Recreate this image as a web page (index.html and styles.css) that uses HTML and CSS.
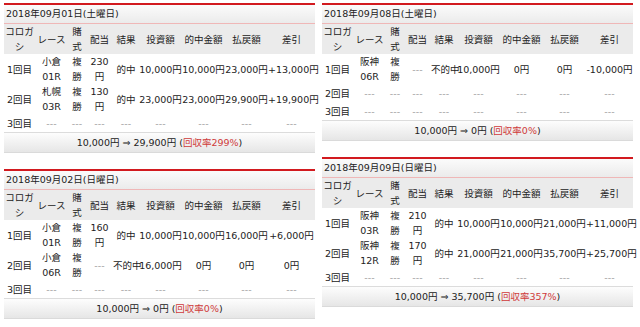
FILE: index.html
```html
<!DOCTYPE html>
<html lang="ja">
<head>
<meta charset="utf-8">
<title>収支</title>
<link rel="stylesheet" href="styles.css">
</head>
<body>
<div class="page">
  <div class="col">
    <section class="card">
      <h2 class="card-title">2018年09月01日(土曜日)</h2>
      <table class="result">
        <colgroup><col class="w1"><col class="w2"><col class="w3"><col class="w4"><col class="w5"><col class="w6"><col class="w6"><col class="w6"><col class="w9"></colgroup>
        <thead><tr><th>コロガ<br>シ</th><th>レース</th><th>賭<br>式</th><th>配当</th><th>結果</th><th>投資額</th><th>的中金額</th><th>払戻額</th><th>差引</th></tr></thead>
        <tbody>
          <tr><td>1回目</td><td>小倉<br>01R</td><td>複<br>勝</td><td>230<br>円</td><td>的中</td><td>10,000円</td><td>10,000円</td><td>23,000円</td><td>+13,000円</td></tr>
          <tr><td>2回目</td><td>札幌<br>03R</td><td>複<br>勝</td><td>130<br>円</td><td>的中</td><td>23,000円</td><td>23,000円</td><td>29,900円</td><td>+19,900円</td></tr>
          <tr class="single"><td>3回目</td><td class="dash">---</td><td class="dash">---</td><td class="dash">---</td><td class="dash">---</td><td class="dash">---</td><td class="dash">---</td><td class="dash">---</td><td class="dash">---</td></tr>
        </tbody>
      </table>
      <div class="card-foot">10,000円 ⇒ 29,900円 (<span class="rate">回収率299%</span>)</div>
    </section>
    <section class="card">
      <h2 class="card-title">2018年09月02日(日曜日)</h2>
      <table class="result">
        <colgroup><col class="w1"><col class="w2"><col class="w3"><col class="w4"><col class="w5"><col class="w6"><col class="w6"><col class="w6"><col class="w9"></colgroup>
        <thead><tr><th>コロガ<br>シ</th><th>レース</th><th>賭<br>式</th><th>配当</th><th>結果</th><th>投資額</th><th>的中金額</th><th>払戻額</th><th>差引</th></tr></thead>
        <tbody>
          <tr><td>1回目</td><td>小倉<br>01R</td><td>複<br>勝</td><td>160<br>円</td><td>的中</td><td>10,000円</td><td>10,000円</td><td>16,000円</td><td>+6,000円</td></tr>
          <tr><td>2回目</td><td>小倉<br>06R</td><td>複<br>勝</td><td class="dash">---</td><td>不的中</td><td>16,000円</td><td>0円</td><td>0円</td><td>0円</td></tr>
          <tr class="single"><td>3回目</td><td class="dash">---</td><td class="dash">---</td><td class="dash">---</td><td class="dash">---</td><td class="dash">---</td><td class="dash">---</td><td class="dash">---</td><td class="dash">---</td></tr>
        </tbody>
      </table>
      <div class="card-foot">10,000円 ⇒ 0円 (<span class="rate">回収率0%</span>)</div>
    </section>
  </div>
  <div class="col">
    <section class="card">
      <h2 class="card-title">2018年09月08日(土曜日)</h2>
      <table class="result">
        <colgroup><col class="w1"><col class="w2"><col class="w3"><col class="w4"><col class="w5"><col class="w6"><col class="w6"><col class="w6"><col class="w9"></colgroup>
        <thead><tr><th>コロガ<br>シ</th><th>レース</th><th>賭<br>式</th><th>配当</th><th>結果</th><th>投資額</th><th>的中金額</th><th>払戻額</th><th>差引</th></tr></thead>
        <tbody>
          <tr><td>1回目</td><td>阪神<br>06R</td><td>複<br>勝</td><td class="dash">---</td><td>不的中</td><td>10,000円</td><td>0円</td><td>0円</td><td>-10,000円</td></tr>
          <tr class="single"><td>2回目</td><td class="dash">---</td><td class="dash">---</td><td class="dash">---</td><td class="dash">---</td><td class="dash">---</td><td class="dash">---</td><td class="dash">---</td><td class="dash">---</td></tr>
          <tr class="single"><td>3回目</td><td class="dash">---</td><td class="dash">---</td><td class="dash">---</td><td class="dash">---</td><td class="dash">---</td><td class="dash">---</td><td class="dash">---</td><td class="dash">---</td></tr>
        </tbody>
      </table>
      <div class="card-foot">10,000円 ⇒ 0円 (<span class="rate">回収率0%</span>)</div>
    </section>
    <section class="card">
      <h2 class="card-title">2018年09月09日(日曜日)</h2>
      <table class="result">
        <colgroup><col class="w1"><col class="w2"><col class="w3"><col class="w4"><col class="w5"><col class="w6"><col class="w6"><col class="w6"><col class="w9"></colgroup>
        <thead><tr><th>コロガ<br>シ</th><th>レース</th><th>賭<br>式</th><th>配当</th><th>結果</th><th>投資額</th><th>的中金額</th><th>払戻額</th><th>差引</th></tr></thead>
        <tbody>
          <tr><td>1回目</td><td>阪神<br>03R</td><td>複<br>勝</td><td>210<br>円</td><td>的中</td><td>10,000円</td><td>10,000円</td><td>21,000円</td><td>+11,000円</td></tr>
          <tr><td>2回目</td><td>阪神<br>12R</td><td>複<br>勝</td><td>170<br>円</td><td>的中</td><td>21,000円</td><td>21,000円</td><td>35,700円</td><td>+25,700円</td></tr>
          <tr class="single"><td>3回目</td><td class="dash">---</td><td class="dash">---</td><td class="dash">---</td><td class="dash">---</td><td class="dash">---</td><td class="dash">---</td><td class="dash">---</td><td class="dash">---</td></tr>
        </tbody>
      </table>
      <div class="card-foot">10,000円 ⇒ 35,700円 (<span class="rate">回収率357%</span>)</div>
    </section>
  </div>
</div>
</body>
</html>
```
FILE: styles.css
```css
* { box-sizing: border-box; }
html, body { margin: 0; padding: 0; background: #fff; }
body {
  font-family: "DejaVu Sans", "Noto Sans CJK JP", sans-serif;
  font-size: 9.5px;
  color: #222;
}
.page {
  display: flex;
  gap: 7px;
  padding: 3px 0 0 4px;
}
.col {
  width: 311px;
  display: flex;
  flex-direction: column;
  gap: 16px;
}
.card {
  border-top: 2px solid #d21a1f;
}
.card-title {
  margin: 0;
  height: 19px;
  line-height: 18px;
  padding: 0 0 0 2px;
  font-size: 9.5px;
  font-weight: normal;
  background: linear-gradient(#fbfbfb, #ebebeb);
  border-bottom: 1px solid #efb7b7;
}
.result {
  width: 100%;
  border-collapse: collapse;
  table-layout: fixed;
}
.w1 { width: 31px; }
.w2 { width: 33px; }
.w3 { width: 18px; }
.w4 { width: 27px; }
.w5 { width: 26px; }
.w6 { width: 43px; }
.w9 { width: 47px; }
.result th,
.result td {
  padding: 0;
  text-align: center;
  vertical-align: middle;
  line-height: 15px;
  white-space: nowrap;
  font-weight: normal;
}
.result thead tr { background: #ebebeb; height: 30px; }
.result tbody tr { height: 30px; }
.result tbody tr.single { height: 18px; }
.result td.dash { color: #a0a0a0; }
.card-foot {
  height: 21px;
  line-height: 19px;
  text-align: center;
  border-top: 1px solid #dcdcdc;
  border-bottom: 1px solid #dadada;
  background: linear-gradient(#fdfdfd, #e6e6e6);
}
.rate { color: #cf3a3a; }
```
